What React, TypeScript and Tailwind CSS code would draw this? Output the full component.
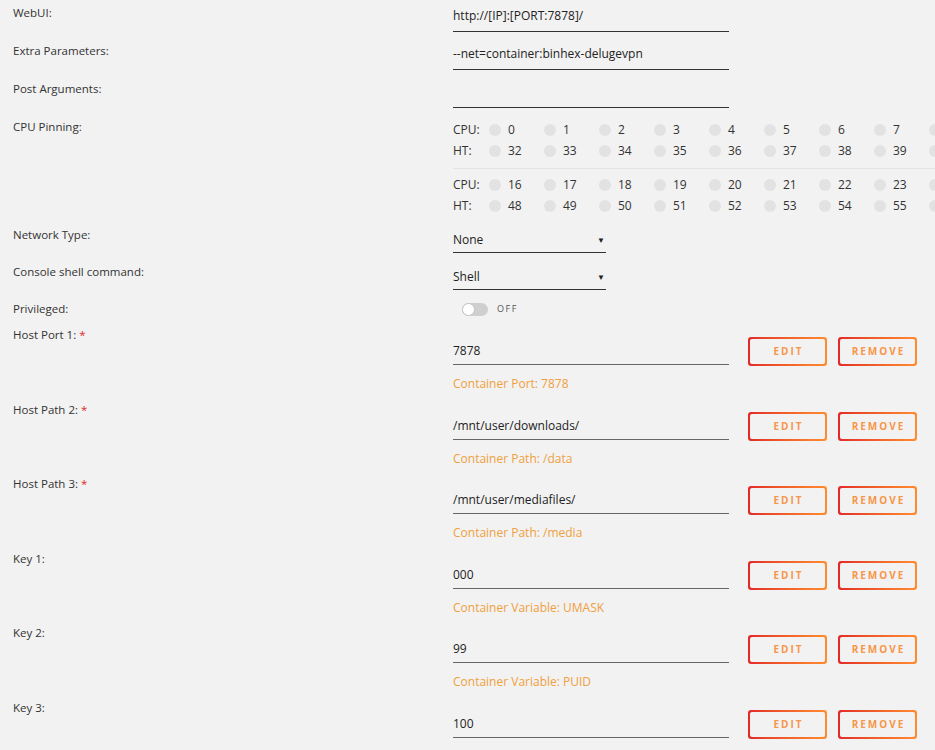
import React from 'react'

const font = { fontFamily: '"Open Sans", "Noto Sans", sans-serif' }

const Label = ({ children }: { children: React.ReactNode }) => (
    <div className="pl-[13px] pt-[5px] leading-4 text-[11.5px] text-[#333]">{children}</div>
)

const TextRow = ({ label, value }: { label: string; value: string }) => (
    <div className="grid grid-cols-[453px_1fr] h-[38px]">
        <Label>{label}</Label>
        <div className="pt-[8px]">
            <div className="w-[276px] h-[24px] leading-4 text-[#222] border-b border-[#333]">{value}</div>
        </div>
    </div>
)

const SelectRow = ({ label, value, h }: { label: string; value: string; h: string }) => (
    <div className={`grid grid-cols-[453px_1fr] ${h}`}>
        <Label>{label}</Label>
        <div className="pt-[10px]">
            <div className="w-[153px] h-[21px] leading-4 text-[#222] border-b border-[#333] flex justify-between pr-[1px]">
                <span>{value}</span>
                <span className="text-[8px] leading-4">▼</span>
            </div>
        </div>
    </div>
)

const GradButton = ({ text }: { text: string }) => (
    <div className="w-[79px] h-[29px] rounded-[3px] p-[2px] bg-gradient-to-r from-[#e22828] to-[#ff8c2f]">
        <div className="w-full h-full rounded-[2px] bg-[#f2f2f2] flex items-center justify-center">
            <span className="text-[10px] font-bold tracking-[2px] pl-[2px] text-[#f7964a]">{text}</span>
        </div>
    </div>
)

const ConfigRow = ({ label, value, note, required }: { label: string; value: string; note?: string; required?: boolean }) => (
    <div className="grid grid-cols-[453px_1fr] h-[74.6px]">
        <Label>
            {label} {required && <span className="text-[#e22828]">*</span>}
        </Label>
        <div>
            <div className="flex">
                <div className="pt-[21px] w-[276px]">
                    <div className="h-[22px] leading-4 text-[#222] border-b border-[#666]">{value}</div>
                </div>
                <div className="flex gap-[11px] ml-[19px] mt-[15px]">
                    <GradButton text="EDIT" />
                    <GradButton text="REMOVE" />
                </div>
            </div>
            {note && <div className="mt-[10px] leading-4 text-[#f0a040]">{note}</div>}
        </div>
    </div>
)

const PinLine = ({ tag, nums }: { tag: string; nums: number[] }) => (
    <div className="flex items-center h-[21px] whitespace-nowrap">
        <span className="w-[36px] shrink-0 text-[#333]">{tag}</span>
        {nums.map((n) => (
            <span key={n} className="flex items-center w-[55px] shrink-0">
                <span className="w-3 h-3 shrink-0 rounded-full bg-[#e2e2e2] mr-[7px]" />
                <span className="text-[#333]">{n}</span>
            </span>
        ))}
    </div>
)

const range = (a: number) => Array.from({ length: 9 }, (_, i) => a + i)

export default function App() {
    return (
        <div className="w-[935px] h-[750px] overflow-hidden bg-[#f2f2f2] text-[12px]" style={font}>
            <TextRow label="WebUI:" value="http://[IP]:[PORT:7878]/" />
            <TextRow label="Extra Parameters:" value="--net=container:binhex-delugevpn" />
            <TextRow label="Post Arguments:" value="" />

            <div className="grid grid-cols-[453px_482px] h-[108px]">
                <Label>CPU Pinning:</Label>
                <div className="pt-[5px] overflow-hidden">
                    <PinLine tag="CPU:" nums={range(0)} />
                    <PinLine tag="HT:" nums={range(32)} />
                    <div className="h-px bg-[#e4e4e4] mt-[7px] mb-[5px] w-[600px]" />
                    <PinLine tag="CPU:" nums={range(16)} />
                    <PinLine tag="HT:" nums={range(48)} />
                </div>
            </div>

            <SelectRow label="Network Type:" value="None" h="h-[37px]" />
            <SelectRow label="Console shell command:" value="Shell" h="h-[37px]" />

            <div className="grid grid-cols-[453px_1fr] h-[26px]">
                <Label>Privileged:</Label>
                <div className="flex items-center pl-[9px] pt-[2px] h-[24px]">
                    <div className="w-[26px] h-[13px] rounded-full bg-[#cfcfcf] relative">
                        <div className="absolute left-0 top-0 w-[13px] h-[13px] rounded-full bg-white border border-[#c4c4c4]" />
                    </div>
                    <span className="ml-[9px] text-[9px] tracking-[1.5px] text-[#555]">OFF</span>
                </div>
            </div>

            <ConfigRow label="Host Port 1:" value="7878" note="Container Port: 7878" required />
            <ConfigRow label="Host Path 2:" value="/mnt/user/downloads/" note="Container Path: /data" required />
            <ConfigRow label="Host Path 3:" value="/mnt/user/mediafiles/" note="Container Path: /media" required />
            <ConfigRow label="Key 1:" value="000" note="Container Variable: UMASK" />
            <ConfigRow label="Key 2:" value="99" note="Container Variable: PUID" />
            <ConfigRow label="Key 3:" value="100" />
        </div>
    )
}
